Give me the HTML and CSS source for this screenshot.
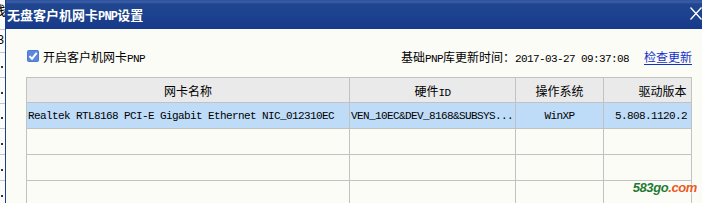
FILE: index.html
```html
<!DOCTYPE html>
<html lang="zh-CN">
<head>
<meta charset="utf-8">
<title>无盘客户机网卡PNP设置</title>
<link rel="stylesheet" href="styles.css">
</head>
<body>
<div class="screen">
  <div class="bgwin">
    <div class="bg-row r0"><span class="cut">栈</span></div>
    <div class="bg-row r1"><span class="cut3">3</span></div>
    <div class="bg-row r2"><i class="dot"></i></div>
    <div class="bg-row r3"><i class="dot"></i></div>
    <div class="bg-row r4"><i class="dot"></i></div>
    <div class="bg-row r3"><i class="dot"></i></div>
    <div class="bg-row r3"><i class="dot"></i></div>
    <div class="bg-row r3"><i class="dot"></i></div>
  </div>
  <div class="dialog">
    <div class="titlebar">
      <span class="title">无盘客户机网卡<span class="mono">PNP</span>设置</span>
      <span class="close">
        <svg width="12" height="13" viewBox="0 0 12 13"><path d="M0.5 0.5 L11.5 12.5 M11.5 0.5 L0.5 12.5" stroke="#fff" stroke-width="1.3" fill="none"/></svg>
      </span>
    </div>
    <div class="content">
      <div class="toolbar">
        <label class="check">
          <svg class="box" width="12" height="12" viewBox="0 0 12 12"><rect x="0.5" y="0.5" width="11" height="11" rx="1" fill="#5c87df" stroke="#4d78cf"/><path d="M2.4 6.1 L5 8.8 L9.7 2.9" fill="none" stroke="#fff" stroke-width="2"/></svg>
          <span>开启客户机网卡<span class="mono">PNP</span></span>
        </label>
        <div class="update">
          <span>基础<span class="mono">PNP</span>库更新时间：<span class="mono">2017-03-27 09:37:08</span></span>
          <a class="link">检查更新</a>
        </div>
      </div>
      <div class="grid">
        <div class="row head">
          <div class="cell c1"><span>网卡名称</span></div>
          <div class="cell c2"><span>硬件<span class="mono">ID</span></span></div>
          <div class="cell c3"><span>操作系统</span></div>
          <div class="cell c4"><span>驱动版本</span></div>
        </div>
        <div class="row sel">
          <div class="cell c1"><span class="mono">Realtek RTL8168 PCI-E Gigabit Ethernet NIC_012310EC</span></div>
          <div class="cell c2"><span class="mono">VEN_10EC&amp;DEV_8168&amp;SUBSYS...</span></div>
          <div class="cell c3"><span class="mono">WinXP</span></div>
          <div class="cell c4"><span class="mono">5.808.1120.2</span></div>
        </div>
        <div class="row">
          <div class="cell c1"></div><div class="cell c2"></div><div class="cell c3"></div><div class="cell c4"></div>
        </div>
        <div class="row">
          <div class="cell c1"></div><div class="cell c2"></div><div class="cell c3"></div><div class="cell c4"></div>
        </div>
        <div class="row">
          <div class="cell c1"></div><div class="cell c2"></div><div class="cell c3"></div><div class="cell c4"></div>
        </div>
      </div>
    </div>
    <div class="watermark">583go<span>.com</span></div>
  </div>
</div>
</body>
</html>
```
FILE: styles.css
```css
html, body {
  margin: 0;
  padding: 0;
}
body {
  width: 702px;
  height: 203px;
  overflow: hidden;
  background: #fcfcf7;
  font-family: "Noto Sans CJK SC", "Liberation Sans", sans-serif;
  font-size: 12px;
  color: #000;
}
.mono {
  font-family: "Liberation Mono", "Noto Sans CJK SC", monospace;
  font-size: 11px;
  letter-spacing: -0.6px;
}
.screen {
  display: flex;
  height: 203px;
}
.bgwin {
  width: 5px;
  flex: none;
  overflow: hidden;
  background: #fbfbfb;
  display: flex;
  flex-direction: column;
}
.bg-row {
  flex: none;
  box-sizing: border-box;
  border-bottom: 1px solid #c6c6c6;
  display: flex;
  align-items: flex-end;
  padding-bottom: 9px;
  font-size: 13px;
  line-height: 13px;
}
.bg-row.r0 { height: 30px; align-items: flex-start; padding: 3px 0 0 0; }
.bg-row.r1 { height: 23px; align-items: center; padding: 0; }
.bg-row.r2 { height: 25px; }
.bg-row.r3 { height: 26px; }
.bg-row.r4 { height: 25px; }
.cut { margin-left: -7px; white-space: nowrap; }
.cut3 { margin-left: -3px; font-family: "Liberation Mono", monospace; font-size: 12px; }
.dot {
  display: block;
  width: 2px;
  height: 2px;
  background: #333;
  margin-left: 1px;
}
.dialog {
  flex: 1;
  min-width: 0;
  position: relative;
  border-left: 1px solid #1b3f8d;
  display: flex;
  flex-direction: column;
  background: #fcfcf7;
}
.titlebar {
  height: 29px;
  flex: none;
  display: flex;
  align-items: center;
  color: #fff;
  background: linear-gradient(#2d519d 0, #3b5ea7 2px, #21468f 4px, #1c418d 55%, #17398a 100%);
}
.title {
  font-weight: bold;
  font-size: 13px;
  padding-left: 1px;
  white-space: nowrap;
}
.title .mono {
  font-size: 12px;
  font-weight: bold;
  letter-spacing: -0.8px;
}
.close {
  margin-left: auto;
  align-self: flex-start;
  margin-top: 7px;
  width: 12px;
  height: 13px;
  display: flex;
}
.content {
  flex: 1;
  padding: 21px 10px 0 20px;
  display: flex;
  flex-direction: column;
  min-height: 0;
}
.toolbar {
  height: 12px;
  flex: none;
  margin-bottom: 15px;
  display: flex;
  align-items: center;
  white-space: nowrap;
}
.check {
  display: flex;
  align-items: center;
  gap: 4px;
  margin-left: 1px;
}
.box { display: block; flex: none; }
.update {
  margin-left: auto;
  display: flex;
  align-items: center;
  gap: 15px;
}
.link {
  color: #1432c8;
  text-decoration: underline;
  text-underline-offset: 2px;
}
.grid {
  width: 666px;
  flex: 1;
  box-sizing: border-box;
  border-top: 1px solid #c2c2c2;
  border-left: 1px solid #c2c2c2;
  border-right: 1px solid #c2c2c2;
  overflow: hidden;
}
.row {
  display: grid;
  grid-template-columns: 323px 166px 88px 118px;
  width: max-content;
}
.cell {
  box-sizing: border-box;
  height: 26px;
  border-right: 1px solid #c2c2c2;
  border-bottom: 1px solid #c2c2c2;
  display: flex;
  align-items: center;
  overflow: hidden;
  white-space: nowrap;
}
.head .cell {
  height: 25px;
  background: #eaeaea;
  justify-content: center;
}
.sel .cell {
  background: #bedcf8;
}
.sel .c1, .sel .c2 { padding-left: 1px; }
.sel .c3 { justify-content: center; }
.sel .c4 { padding-left: 11px; }
.watermark {
  position: absolute;
  right: 5px;
  bottom: 9px;
  font-family: "Liberation Sans", sans-serif;
  font-weight: bold;
  font-style: italic;
  font-size: 13px;
  line-height: 13px;
  letter-spacing: -0.4px;
  color: #1f7a30;
  text-shadow: 0 0 3px #fff, 0 0 3px #fff;
}
.watermark span { color: #ea5a1c; }
```
